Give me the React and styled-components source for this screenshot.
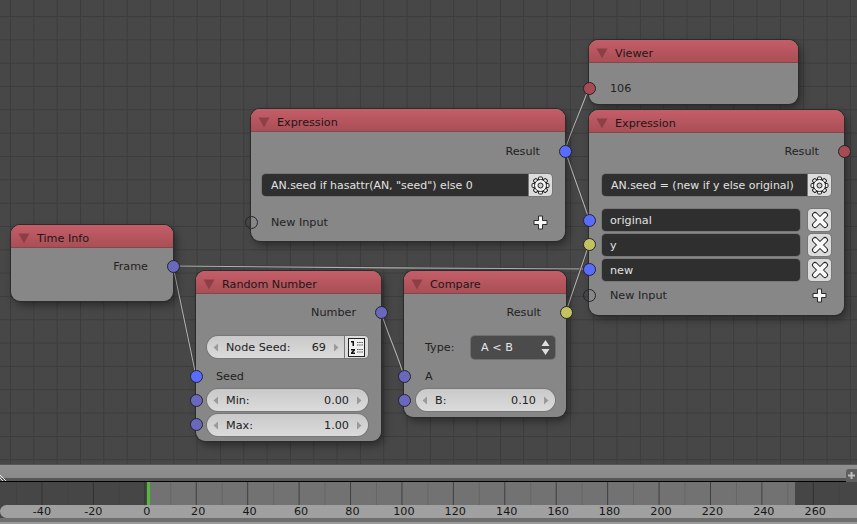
import React from "react";
import styled, { createGlobalStyle } from "styled-components";

const Global = createGlobalStyle`
  html, body { margin: 0; padding: 0; background: #464646; }
  * { box-sizing: border-box; }
`;

const Page = styled.div`
  width: 857px; height: 524px; overflow: hidden; display: flex; flex-direction: column;
  font-family: "DejaVu Sans", sans-serif; font-size: 11.2px; color: #222;
`;
const Canvas = styled.div`
  position: relative; height: 464px; flex: none; background-color: #474747;
  background-image: linear-gradient(to right, #3c3c3c 1px, transparent 1px), linear-gradient(to bottom, #3c3c3c 1px, transparent 1px);
  background-size: 23.33px 23.33px; background-position: 10px 16px;
`;
const Wires = styled.svg`position: absolute; inset: 0; width: 857px; height: 464px;`;
const Node = styled.div`
  position: absolute; left: ${p => p.$x}px; top: ${p => p.$y}px; width: ${p => p.$w}px;
  background: #878787; border-radius: 9px; box-shadow: 0 0 0 1px #2b2b2b, 3px 4px 9px rgba(0,0,0,.42);
  padding-bottom: ${p => p.$pb}px;
`;
const Header = styled.div`
  height: 23px; border-radius: 9px 9px 0 0; background: linear-gradient(#c45e68, #aa4e56);
  display: flex; align-items: center; padding: 4px 0 0 7px; gap: 7px; color: #211719;
  border-bottom: 1px solid #7e4a4e;
`;
const Caret = styled.svg`width: 12px; height: 12px; flex: none;`;
const Body = styled.div`padding-top: ${p => p.$pt}px;`;
const Row = styled.div`
  position: relative; height: ${p => p.$h || 24}px; margin-top: ${p => p.$mt || 0}px;
  display: flex; align-items: center; justify-content: ${p => p.$end ? "flex-end" : "flex-start"};
  padding: ${p => p.$end ? "1px 25px 0 0" : `1px 12px 0 ${p.$pl || 20}px`}; white-space: nowrap;
`;
const FieldRow = styled(Row)`padding: 0 ${p => p.$pr || 13}px 0 ${p => p.$pl || 11}px; gap: ${p => p.$gap || 0}px;`;
const Socket = styled.span`
  position: absolute; top: 50%; width: 13px; height: 13px; margin-top: -6.5px; border-radius: 50%;
  ${p => p.$right ? "right: -6.5px;" : "left: -6.5px;"}
  background: ${p => p.$c || "transparent"}; border: 1px solid #24242c;
`;
const Grow = styled.span`flex: 1;`;
const AddIcon = styled.svg`width: 15px; height: 15px; flex: none; margin-right: 5px;`;
const TextField = styled.div`
  flex: 1; height: 22px; background: #2f2f2f; color: #e2e2e2; border-radius: ${p => p.$joined ? "4px 0 0 4px" : "4px"};
  display: flex; align-items: center; padding: 1px 0 0 ${p => p.$joined ? 9 : 8}px; box-shadow: 0 0 0 1px #777;
  white-space: nowrap; overflow: hidden; font-size: ${p => p.$joined ? 10.95 : 11.2}px;
`;
const IconBox = styled.div`
  width: 23px; height: 22px; flex: none; background: #dcdcdc; box-shadow: 0 0 0 1px #777; display: flex; align-items: center; justify-content: center;
  border-radius: ${p => p.$joined ? "0 4px 4px 0" : "4px"};
`;
const Pill = styled.div`
  flex: 1; height: 22px; border-radius: ${p => p.$joined ? "11px 0 0 11px" : "11px"};
  background: linear-gradient(#c9c9c9, #dbdbdb); box-shadow: 0 0 0 1px #777; display: flex; align-items: center; padding: 1px 6px 0; color: #222;
`;
const Arrow = styled.svg`width: 6px; height: 9px; flex: none;`;
const PillLabel = styled.span`flex: 1; padding-left: 7px;`;
const PillValue = styled.span`padding-right: 7px;`;
const Label = styled.span`width: 47px; flex: none; padding-left: 10px;`;
const SelectBox = styled.div`
  flex: 1; height: 23px; background: #4b4b4b; color: #e6e6e6; border-radius: 4px; display: flex; align-items: center;
  padding: 0 5px 0 10px; margin-left: 9px; box-shadow: 0 0 0 1px #6f6f6f;
`;
const Scroll = styled.div`
  position: relative; height: 17px; flex: none; background: linear-gradient(#8f8f8f 0, #8a8a8a 13px, #565656 13px, #565656 100%);
  border-top: 1px solid #555;
`;
const Hatch = styled.svg`position: absolute; left: 0; bottom: 0; width: 7px; height: 7px;`;
const Corner = styled.div`
  position: absolute; right: 0; top: 4px; width: 11px; height: 13px; background: #5e5e5e; border-radius: 3px 0 0 0;
  display: flex; align-items: center; justify-content: center;
`;
const Sep = styled.div`height: 1px; flex: none; background: #000;`;
const Timeline = styled.div`
  position: relative; height: 23px; flex: none; display: flex;
  &::after {
    content: ""; position: absolute; inset: 0;
    background-image: linear-gradient(to right, rgba(40,40,40,.7) 1px, transparent 1px), linear-gradient(to right, rgba(50,50,50,.2) 1px, transparent 1px);
    background-size: 51.43px 100%, 51.43px 100%; background-position: 41.5px 0, 16px 0;
  }
`;
const Range = styled.div`
  background: ${p => p.$on ? "#727272" : "#464646"}; width: ${p => p.$w}px; flex: ${p => p.$w ? "none" : 1};
`;
const Playhead = styled.div`position: absolute; left: 147px; top: 0; bottom: 0; width: 3px; background: #54b83c; z-index: 1;`;
const Ruler = styled.div`
  height: 13px; flex: none; background: #a0a0a0; border-radius: 7px 0 0 7px; display: flex; padding-left: 17.2px; align-items: center; color: #161616;
`;
const Tick = styled.span`
  width: 51.43px; flex: none; text-align: center;
  ${p => p.$neg ? "padding-right: 2px;" : "padding-left: 2px;"}
`;
const Foot = styled.div`flex: 1; background: linear-gradient(#6e6e6e 0, #6e6e6e 4px, #9a9a9a 4px);`;

const C = { blue: "#5a6cff", int: "#6868bc", yel: "#c2c25f", red: "#a64b53" };

const CaretIcon = () => (
  <Caret viewBox="0 0 12 12"><path d="M0.5 1.5H11.5L6 11.5Z" fill="#8d3f46" /></Caret>
);
const Left = () => <Arrow viewBox="0 0 6 9"><path d="M5 0.5V8.5L0.5 4.5Z" fill="#9a9a9a" /></Arrow>;
const Right = () => <Arrow viewBox="0 0 6 9"><path d="M1 0.5V8.5L5.5 4.5Z" fill="#9a9a9a" /></Arrow>;

const Plus = () => (
  <AddIcon viewBox="0 0 15 15">
    <path d="M5.500 1h4v4.500H14v4H9.500V14h-4V9.500H1v-4h4.500Z" fill="#f6f6f6" stroke="#2a2a2a" strokeWidth="1" />
  </AddIcon>
);
const Gear = () => {
  const teeth = [0, 45, 90, 135, 180, 225, 270, 315];
  return (
    <svg width="19" height="19" viewBox="0 0 19 19">
      {teeth.map(a => <rect key={a} x="7.5" y="1" width="4" height="4" rx="1" fill="#f4f4f4" stroke="#222" strokeWidth="1" transform={`rotate(${a} 9.500 9.500)`} />)}
      <circle cx="9.5" cy="9.500" r="6" fill="#f4f4f4" stroke="#222" strokeWidth="1" />
      <circle cx="9.5" cy="9.500" r="2.500" fill="#cfcfcf" stroke="#222" strokeWidth="1" />
    </svg>
  );
};
const Cross = () => (
  <svg width="18" height="18" viewBox="0 0 18 18" strokeLinecap="round">
    <path d="M4 4 14 14M14 4 4 14" stroke="#222" strokeWidth="6" />
    <path d="M4 4 14 14M14 4 4 14" stroke="#f8f8f8" strokeWidth="4" />
  </svg>
);
const ListIcon = () => (
  <svg width="17" height="19" viewBox="0 0 17 19">
    <rect x="0.500" y="0.500" width="16" height="18" fill="#f0f0f0" stroke="#222" />
    <path d="M3 3h3v5H4.500V4.500H3ZM3 11h4v1.500l-2 2h2V16H3v-1.500l2-2H3Z" fill="#111" />
    <path d="M9 4.500h6M9 7h6M9 11.500h6M9 14h6" stroke="#555" strokeWidth="1" strokeDasharray="1.500 .7" />
  </svg>
);
const Updown = () => (
  <svg width="9" height="17" viewBox="0 0 9 17">
    <path d="M4.500 1 8.500 7H.5ZM4.500 16 .5 10h8Z" fill="#dedede" />
  </svg>
);

const NumField = ({ label, value, joined }) => (
  <Pill $joined={joined}><Left /><PillLabel>{label}</PillLabel><PillValue>{value}</PillValue><Right /></Pill>
);

const wires = [
  "M173 266C180 300 189 342 196 376",
  "M173 266C300 268 460 268 589 269",
  "M381 312C388 335 397 353 404 376",
  "M566 312C573 290 582 266 589 244",
  "M565 150C572 128 582 108 589 87",
  "M565 150C572 172 582 198 589 219",
];

const ticks = [-40,-20,0,20,40,60,80,100,120,140,160,180,200,220,240,260];

export default function App() {
  return (
    <Page>
      <Global />
      <Canvas>
        <Wires viewBox="0 0 857 464" fill="none">
          {wires.map((d, i) => <g key={i}><path d={d} stroke="#3a3a3a" strokeWidth="2.200" /><path d={d} stroke="#b4b4b4" strokeWidth="1.100" /></g>)}
        </Wires>

        <Node $x={589} $y={40} $w={209} $pb={4}>
          <Header><CaretIcon />Viewer</Header>
          <Body $pt={13}>
            <Row $pl={21}><Socket $c={C.red} />106</Row>
          </Body>
        </Node>

        <Node $x={251} $y={109} $w={314} $pb={7}>
          <Header><CaretIcon />Expression</Header>
          <Body $pt={7}>
            <Row $end>Result<Socket $right $c={C.blue} /></Row>
            <FieldRow $mt={10}>
              <TextField $joined>AN.seed if hasattr(AN, "seed") else 0</TextField>
              <IconBox $joined><Gear /></IconBox>
            </FieldRow>
            <Row $mt={13}><Socket />New Input<Grow /><Plus /></Row>
          </Body>
        </Node>

        <Node $x={589} $y={110} $w={255} $pb={8}>
          <Header><CaretIcon />Expression</Header>
          <Body $pt={6}>
            <Row $end>Result<Socket $right $c={C.red} /></Row>
            <FieldRow $mt={10} $pl={13}>
              <TextField $joined>AN.seed = (new if y else original)</TextField>
              <IconBox $joined><Gear /></IconBox>
            </FieldRow>
            <FieldRow $mt={11} $pl={13} $gap={8}>
              <Socket $c={C.blue} /><TextField>original</TextField><IconBox><Cross /></IconBox>
            </FieldRow>
            <FieldRow $h={25} $pl={13} $gap={8}>
              <Socket $c={C.yel} /><TextField>y</TextField><IconBox><Cross /></IconBox>
            </FieldRow>
            <FieldRow $h={25} $pl={13} $gap={8}>
              <Socket $c={C.blue} /><TextField>new</TextField><IconBox><Cross /></IconBox>
            </FieldRow>
            <Row $mt={1} $pl={21}><Socket />New Input<Grow /><Plus /></Row>
          </Body>
        </Node>

        <Node $x={11} $y={225} $w={162} $pb={23}>
          <Header><CaretIcon />Time Info</Header>
          <Body $pt={6}>
            <Row $end>Frame<Socket $right $c={C.int} /></Row>
          </Body>
        </Node>

        <Node $x={196} $y={271} $w={185} $pb={4}>
          <Header><CaretIcon />Random Number</Header>
          <Body $pt={6}>
            <Row $end>Number<Socket $right $c={C.int} /></Row>
            <FieldRow $mt={11}>
              <NumField label="Node Seed:" value="69" joined />
              <IconBox $joined><ListIcon /></IconBox>
            </FieldRow>
            <Row $mt={5}><Socket $c={C.blue} />Seed</Row>
            <FieldRow><Socket $c={C.int} /><NumField label="Min:" value="0.00" /></FieldRow>
            <FieldRow $h={25}><Socket $c={C.int} /><NumField label="Max:" value="1.00" /></FieldRow>
          </Body>
        </Node>

        <Node $x={404} $y={271} $w={162} $pb={5}>
          <Header><CaretIcon />Compare</Header>
          <Body $pt={6}>
            <Row $end>Result<Socket $right $c={C.yel} /></Row>
            <FieldRow $mt={11} $pl={11} $pr={11}>
              <Label>Type:</Label>
              <SelectBox>A &lt; B<Grow /><Updown /></SelectBox>
            </FieldRow>
            <Row $mt={5} $pl={21}><Socket $c={C.int} />A</Row>
            <FieldRow $pl={12} $pr={11}><Socket $c={C.int} /><NumField label="B:" value="0.10" /></FieldRow>
          </Body>
        </Node>
      </Canvas>

      <Scroll>
        <Hatch viewBox="0 0 7 7"><path d="M0 1 6 7M0 4 3 7" stroke="#e8e8e8" strokeWidth="1" /></Hatch>
        <Corner>
          <svg width="7" height="7" viewBox="0 0 7 7"><path d="M2.500 0h2v2.500H7v2H4.500V7h-2V4.500H0v-2h2.500Z" fill="#bdbdbd" /></svg>
        </Corner>
      </Scroll>
      <Sep />
      <Timeline>
        <Range $w={147} />
        <Range $on $w={648} />
        <Range />
        <Playhead />
      </Timeline>
      <Ruler>
        {ticks.map(t => <Tick key={t} $neg={t < 0}>{t}</Tick>)}
      </Ruler>
      <Foot />
    </Page>
  );
}
